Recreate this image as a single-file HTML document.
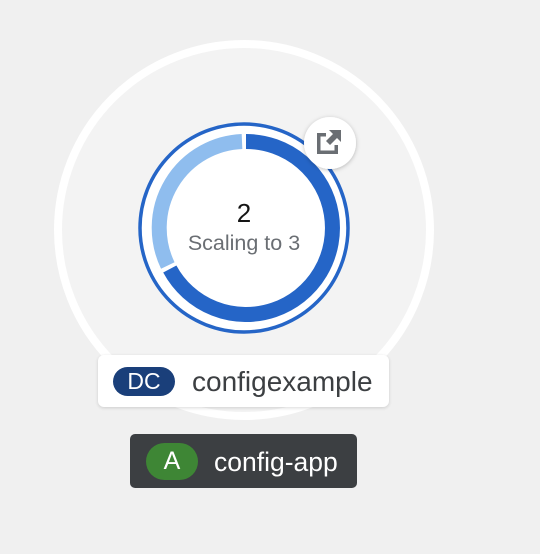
<!DOCTYPE html>
<html><head><style>
body{margin:0;width:540px;height:554px;background:#f0f0f0;position:relative;overflow:hidden;font-family:"Liberation Sans",sans-serif}
.abs{position:absolute}
</style></head><body>
<svg class="abs" style="left:0;top:0" width="540" height="554">
<defs><filter id="sh" x="-30%" y="-30%" width="160%" height="160%"><feDropShadow dx="0" dy="1" stdDeviation="2" flood-opacity="0.25"/></filter></defs>
<circle cx="244" cy="230" r="186" fill="#f3f3f3" stroke="#fff" stroke-width="8"/>
<circle cx="244" cy="228" r="104" fill="#fff" stroke="#2565c7" stroke-width="3.5"/>
<path d="M246 141.5 A86.5 86.5 0 1 1 169.8 269" fill="none" stroke="#2565c7" stroke-width="15"/>
<path d="M167.8 265.5 A86.5 86.5 0 0 1 242 141.5" fill="none" stroke="#8fbdee" stroke-width="15"/>
<circle cx="330" cy="143" r="26" fill="#fff" filter="url(#sh)"/>
<g fill="#6a6e73">
<path d="M317 133h9v3.5h-5.5v14h14v-5.5h3.5v9h-21z"/>
<path d="M329 130h12v12l-4-4-7 7-4-4 7-7z"/>
</g>
<text x="244" y="222" text-anchor="middle" font-size="26" fill="#151515">2</text>
<text x="244" y="250" text-anchor="middle" font-size="21.5" fill="#6a6e73">Scaling to 3</text>
</svg>
<div class="abs" style="left:98px;top:355px;width:291px;height:52px;background:#fff;border-radius:6px;box-shadow:0 1px 3px rgba(0,0,0,.15)"></div>
<div class="abs" style="left:113px;top:367px;width:62px;height:29px;background:#1a3f7a;border-radius:15px;color:#fff;font-size:23px;line-height:29px;text-align:center">DC</div>
<div class="abs" style="left:192px;top:365px;font-size:28px;line-height:34px;color:#3c3f42">configexample</div>
<div class="abs" style="left:130px;top:434px;width:227px;height:54px;background:#3c3f42;border-radius:5px"></div>
<div class="abs" style="left:146px;top:443px;width:52px;height:37px;background:#3e8635;border-radius:19px;color:#fff;font-size:25px;line-height:37px;text-align:center">A</div>
<div class="abs" style="left:214px;top:445px;font-size:26.5px;line-height:34px;color:#fff">config-app</div>
</body></html>
